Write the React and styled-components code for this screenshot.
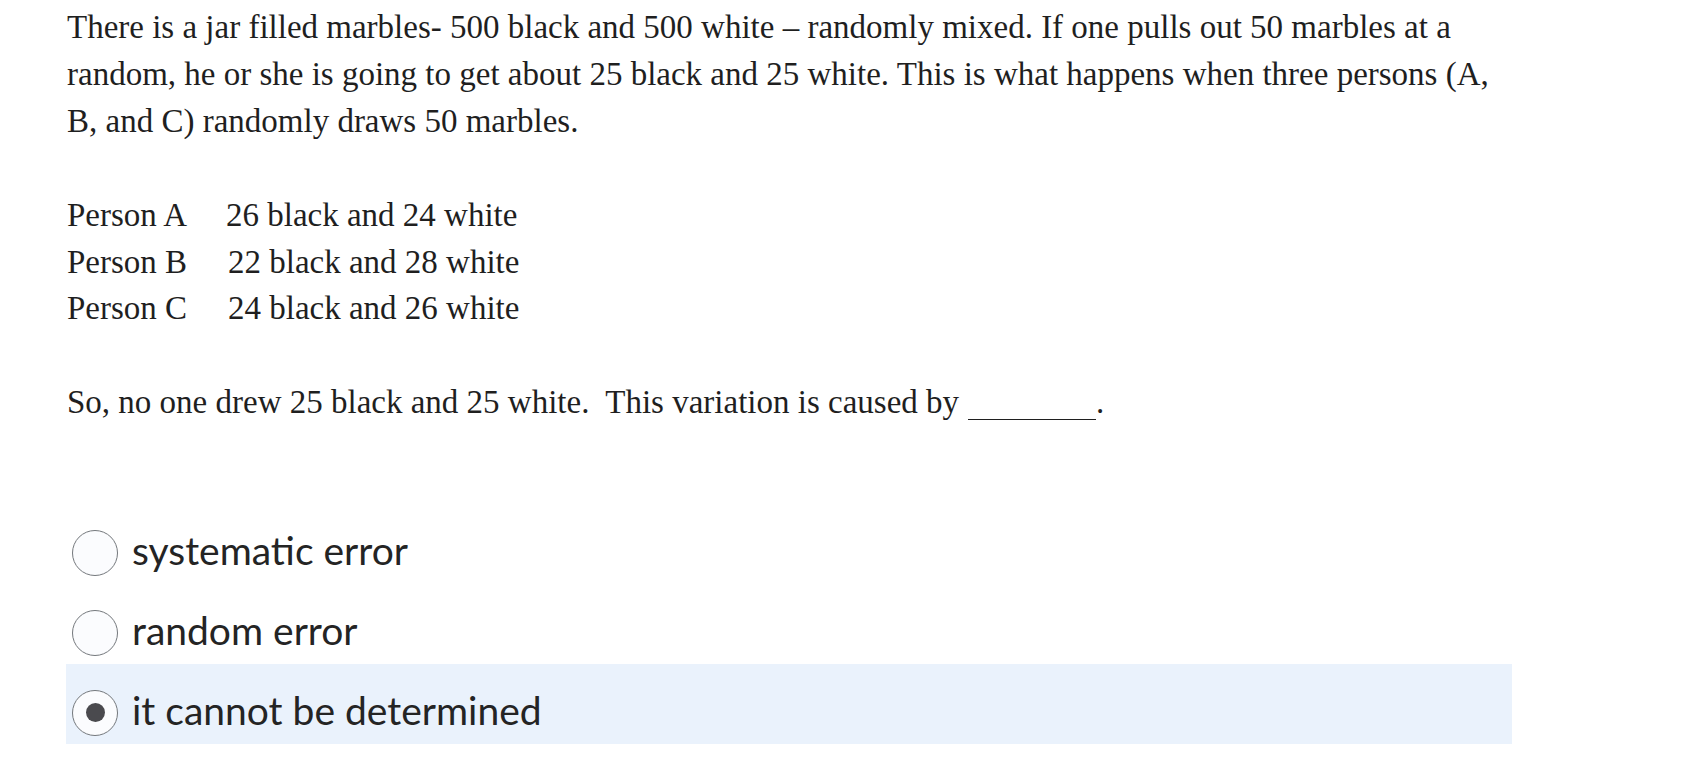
import React from 'react';
import styled, { createGlobalStyle } from 'styled-components';

const GlobalStyle = createGlobalStyle`
  body {
    margin: 0;
    background: #ffffff;
  }
`;

const Page = styled.div`
  width: 1446px;
  padding: 4px 0 0 66px;
  font-family: "Liberation Serif", "Times New Roman", serif;
  font-size: 33px;
  line-height: 47px;
  color: #1f1f1f;
`;

const Paragraph = styled.p`
  margin: 0 0 ${(p) => p.$after || 47}px 1px;
`;

const Results = styled.div`
  display: grid;
  grid-template-columns: 159px auto;
  grid-auto-rows: 46.5px;
  margin: 0 0 47px 1px;
  width: max-content;
`;

const Cell = styled.span`
  padding-left: ${(p) => p.$indent || 0}px;
`;

const Blank = styled.span`
  display: inline-block;
  width: 128px;
  height: 30px;
  margin-left: 9px;
  border-bottom: 1.5px solid #1f1f1f;
  vertical-align: -7px;
`;

const Options = styled.div`
  display: flex;
  flex-direction: column;
`;

const Option = styled.label`
  display: flex;
  align-items: center;
  gap: 14px;
  height: 80px;
  box-sizing: border-box;
  padding: 18px 0 0 6px;
  background: ${(p) => (p.$selected ? '#eaf2fc' : 'transparent')};
  font-family: Lato, "Noto Sans", sans-serif;
  font-size: 39px;
  color: #242424;
  cursor: pointer;
`;

const OptionText = styled.span`
  line-height: 46px;
  padding-bottom: 6px;
`;

const Radio = styled.span`
  flex: none;
  width: 46px;
  height: 46px;
  box-sizing: border-box;
  border-radius: 50%;
  border: 1.5px solid #74787c;
  background: #fbfcfe;
  display: flex;
  align-items: center;
  justify-content: center;

  &::after {
    content: '';
    width: 19px;
    height: 19px;
    border-radius: 50%;
    background: ${(p) => (p.$checked ? '#4a4a4e' : 'transparent')};
  }
`;

const results = [
  ['Person A', '26 black and 24 white', 0],
  ['Person B', '22 black and 28 white', 2],
  ['Person C', '24 black and 26 white', 2],
];

const choices = ['systematic error', 'random error', 'it cannot be determined'];

export default function App() {
  const selected = 2;
  return (
    <>
      <GlobalStyle />
      <Page>
        <Paragraph>
          There is a jar filled marbles- 500 black and 500 white – randomly mixed. If one pulls out 50
          marbles at a random, he or she is going to get about 25 black and 25 white. This is what
          happens when three persons (A, B, and C) randomly draws 50 marbles.
        </Paragraph>
        <Results>
          {results.map(([who, drew, indent]) => (
            <React.Fragment key={who}>
              <Cell>{who}</Cell>
              <Cell $indent={indent}>{drew}</Cell>
            </React.Fragment>
          ))}
        </Results>
        <Paragraph $after={78}>
          So, no one drew 25 black and 25 white.&nbsp; This variation is caused by
          <Blank />.
        </Paragraph>
        <Options>
          {choices.map((c, i) => (
            <Option key={c} $selected={i === selected}>
              <Radio $checked={i === selected} />
              <OptionText>{c}</OptionText>
            </Option>
          ))}
        </Options>
      </Page>
    </>
  );
}
